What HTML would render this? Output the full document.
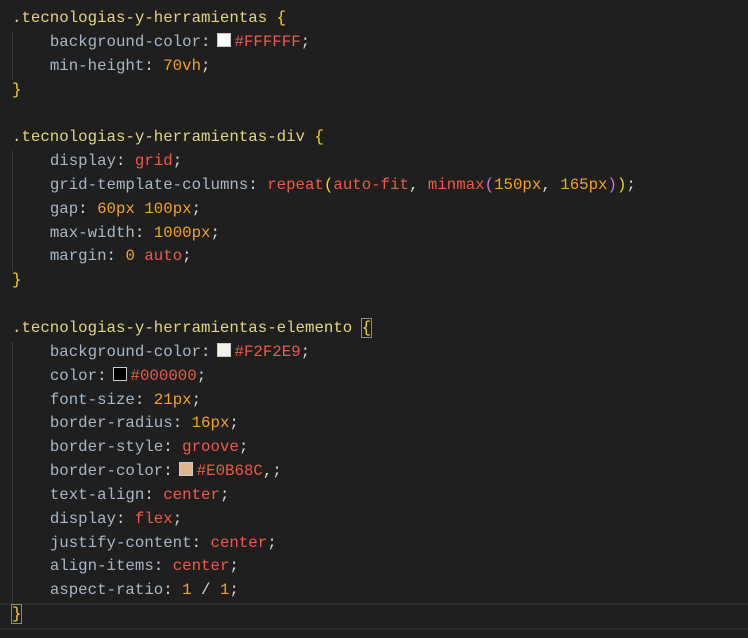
<!DOCTYPE html><html><head><style>
body{margin:0;background:#1f1f1f;width:748px;height:638px;overflow:hidden;position:relative}
.c{position:absolute;left:12px;top:7px;font-family:"Liberation Mono",monospace;font-size:15.75px;line-height:23.84px;color:#d4d4d4;white-space:pre}
.s{color:#e3d580}.p{color:#a9b6c3}.r{color:#ee5a45}.o{color:#f3a12c}.b{color:#f7d51d}.bl{color:#3f9cf0}.pk{color:#d670d6}
.w{display:inline-block;width:12px;height:12px;border:1px solid #ccc;margin:0 4px 0 6px;vertical-align:-1px}
.g{position:absolute;left:12px;width:1px;background:#3a3a3a}
.hl{position:absolute;left:0;right:0;top:603px;height:23px;border-top:2px solid #2c2c2c;border-bottom:2px solid #2c2c2c}
.bb{outline:1px solid #888}
</style></head><body>
<div class="hl"></div>
<div class="g" style="top:32px;height:48px"></div>
<div class="g" style="top:151px;height:120px"></div>
<div class="g" style="top:342px;height:262px"></div>
<div class="c"><span class="s">.tecnologias-y-herramientas</span> <span class="b">{</span>
    <span class="p">background-color</span>:<span class="w" style="background:#fff"></span><span class="r">#FFFFFF</span>;
    <span class="p">min-height</span>: <span class="o">70vh</span>;
<span class="b">}</span>

<span class="s">.tecnologias-y-herramientas-div</span> <span class="b">{</span>
    <span class="p">display</span>: <span class="r">grid</span>;
    <span class="p">grid-template-columns</span>: <span class="r">repeat</span><span class="b">(</span><span class="r">auto-fit</span>, <span class="r">minmax</span><span class="pk">(</span><span class="o">150px</span>, <span class="o">165px</span><span class="pk">)</span><span class="b">)</span>;
    <span class="p">gap</span>: <span class="o">60px</span> <span class="o">100px</span>;
    <span class="p">max-width</span>: <span class="o">1000px</span>;
    <span class="p">margin</span>: <span class="o">0</span> <span class="r">auto</span>;
<span class="b">}</span>

<span class="s">.tecnologias-y-herramientas-elemento</span> <span class="b bb">{</span>
    <span class="p">background-color</span>:<span class="w" style="background:#F2F2E9"></span><span class="r">#F2F2E9</span>;
    <span class="p">color</span>:<span class="w" style="background:#000"></span><span class="r">#000000</span>;
    <span class="p">font-size</span>: <span class="o">21px</span>;
    <span class="p">border-radius</span>: <span class="o">16px</span>;
    <span class="p">border-style</span>: <span class="r">groove</span>;
    <span class="p">border-color</span>:<span class="w" style="background:#E0B68C"></span><span class="r">#E0B68C</span>,;
    <span class="p">text-align</span>: <span class="r">center</span>;
    <span class="p">display</span>: <span class="r">flex</span>;
    <span class="p">justify-content</span>: <span class="r">center</span>;
    <span class="p">align-items</span>: <span class="r">center</span>;
    <span class="p">aspect-ratio</span>: <span class="o">1</span> / <span class="o">1</span>;
<span class="b bb">}</span></div>
</body></html>
